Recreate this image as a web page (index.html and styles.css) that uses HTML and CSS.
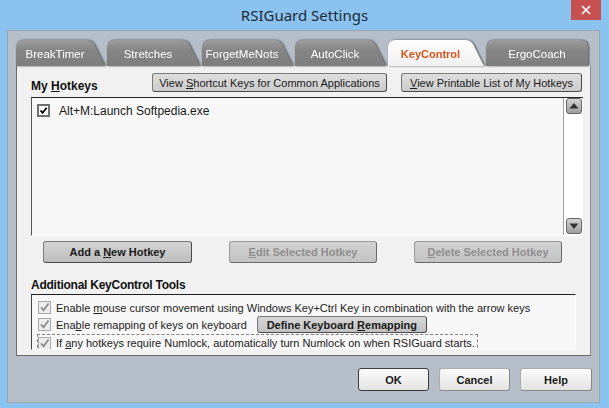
FILE: index.html
```html
<!DOCTYPE html>
<html>
<head>
<meta charset="utf-8">
<link rel="stylesheet" href="styles.css">
</head>
<body>
<div class="window">
  <div class="titlebar">
    <span class="title">RSIGuard Settings</span>
    <div class="close"><svg width="10" height="10" viewBox="0 0 10 10"><path d="M1 1 L9 9 M9 1 L1 9" stroke="#fff" stroke-width="1.7" fill="none"/></svg></div>
  </div>
  <div class="client">
    <div class="tabs">
      <div class="tab-wrap"><div class="tab">BreakTimer</div></div>
      <div class="tab-wrap"><div class="tab">Stretches</div></div>
      <div class="tab-wrap"><div class="tab">ForgetMeNots</div></div>
      <div class="tab-wrap"><div class="tab">AutoClick</div></div>
      <div class="tab-wrap active-wrap"><div class="tab active">KeyControl</div></div>
      <div class="tab-wrap"><div class="tab last">ErgoCoach</div></div>
    </div>
    <div class="panel">
      <div class="hk-head">
        <h2 class="heading">My <u>H</u>otkeys</h2>
        <button class="btn view view-short">View <u>S</u>hortcut Keys for Common Applications</button>
        <button class="btn view view-print"><u>V</u>iew Printable List of My Hotkeys</button>
      </div>
      <div class="list">
        <div class="list-items">
          <div class="item">
            <svg class="cb" width="13" height="13" viewBox="0 0 13 13"><rect x="1" y="1" width="11" height="11" fill="#fff" stroke="#6f6f6f" stroke-width="2"/><path d="M3.5 6.5 L5.6 8.8 L9.6 3.8" stroke="#000" stroke-width="1.8" fill="none"/></svg>
            <span>Alt+M:Launch Softpedia.exe</span>
          </div>
        </div>
        <div class="scroll">
          <svg class="arrow" width="16" height="16" viewBox="0 0 16 16"><defs><linearGradient id="ag" x1="0" y1="0" x2="0" y2="1"><stop offset="0" stop-color="#d6d6d6"/><stop offset="1" stop-color="#9c9c9c"/></linearGradient></defs><rect x="0.5" y="0.5" width="15" height="15" rx="2.5" fill="url(#ag)" stroke="#666"/><path d="M3.5 10.5 L8 5 L12.5 10.5 Z" fill="#333"/></svg>
          <svg class="arrow" width="16" height="16" viewBox="0 0 16 16"><rect x="0.5" y="0.5" width="15" height="15" rx="2.5" fill="url(#ag)" stroke="#666"/><path d="M3.5 5.5 L8 11 L12.5 5.5 Z" fill="#333"/></svg>
        </div>
      </div>
      <div class="actions">
        <button class="btn act">Add a <u>N</u>ew Hotkey</button>
        <button class="btn act disabled"><u>E</u>dit Selected Hotkey</button>
        <button class="btn act disabled"><u>D</u>elete Selected Hotkey</button>
      </div>
      <h2 class="heading tools-head">Additional KeyControl Tools</h2>
      <div class="tools">
        <div class="row">
          <svg class="cb2" width="13" height="13" viewBox="0 0 13 13"><rect x="0.5" y="0.5" width="12" height="12" fill="#ececec" stroke="#a9a9a9"/><path d="M3 6.3 L5.6 9.3 L10.5 2.5" stroke="#8d8d8d" stroke-width="1.8" fill="none"/></svg>
          <span>Enable <u>m</u>ouse cursor movement using Windows Key+Ctrl Key in combination with the arrow keys</span>
        </div>
        <div class="row">
          <svg class="cb2" width="13" height="13" viewBox="0 0 13 13"><rect x="0.5" y="0.5" width="12" height="12" fill="#ececec" stroke="#a9a9a9"/><path d="M3 6.3 L5.6 9.3 L10.5 2.5" stroke="#8d8d8d" stroke-width="1.8" fill="none"/></svg>
          <span>Ena<u>b</u>le remapping of keys on keyboard</span>
          <button class="btn remap">Define Keyboard <u>R</u>emapping</button>
        </div>
        <div class="row">
          <div class="focus">
            <svg class="cb2" width="13" height="13" viewBox="0 0 13 13"><rect x="0.5" y="0.5" width="12" height="12" fill="#ececec" stroke="#a9a9a9"/><path d="M3 6.3 L5.6 9.3 L10.5 2.5" stroke="#8d8d8d" stroke-width="1.8" fill="none"/></svg>
            <span>If <u>a</u>ny hotkeys require Numlock, automatically turn Numlock on when RSIGuard starts.</span>
          </div>
        </div>
      </div>
    </div>
    <div class="footer">
      <button class="btn foot ok">OK</button>
      <button class="btn foot">Cancel</button>
      <button class="btn foot help">Help</button>
    </div>
  </div>
</div>
</body>
</html>
```

FILE: styles.css
```css
* { box-sizing: border-box; }
body {
  margin: 0;
  font-family: "Liberation Sans", Arial, sans-serif;
  color: #1a1a1a;
}
.window {
  width: 609px;
  height: 408px;
  background: #8ac3ef;
  display: flex;
  flex-direction: column;
}
.titlebar {
  height: 30px;
  display: grid;
  grid-template-columns: 1fr auto 1fr;
  align-items: start;
}
.title {
  grid-column: 2;
  font-family: "Noto Sans", "Open Sans", sans-serif;
  font-size: 15px;
  color: #1f2a36;
  padding-top: 5px;
  line-height: 20px;
}
.close {
  grid-column: 3;
  justify-self: end;
  width: 30px;
  height: 20px;
  margin-right: 8px;
  background: #c75151;
  display: flex;
  align-items: center;
  justify-content: center;
}
.client {
  flex: 1;
  margin: 0 9px 5px 7px;
  background: #b6bfc9;
  border: 1px solid #9aa5b1;
  padding: 9px 8px 0 8px;
  display: flex;
  flex-direction: column;
}
.tabs {
  display: grid;
  grid-template-columns: 91px 95px 93px 93px 98px 102px;
  height: 26px;
}
.tab-wrap {
  filter: drop-shadow(1px 0 1px rgba(0, 0, 0, 0.6));
}
.tab {
  height: 26px;
  clip-path: polygon(0 7px, 1px 3px, 3px 1px, 7px 0, calc(100% - 20px) 0, calc(100% - 16px) 1px, calc(100% - 13px) 4px, calc(100% - 2px) 100%, 0 100%);
  background: linear-gradient(#9c9c9c, #858585 40%, #7d7d7d);
  color: #fff;
  font-size: 11.5px;
  display: flex;
  align-items: center;
  justify-content: center;
  padding: 1px 13px 0 0;
}
.tab.active {
  background: linear-gradient(#fdfdfd, #f1f1f1);
  color: #d8521a;
  font-weight: bold;
  font-size: 11px;
}
.tab.last {
  clip-path: polygon(0 7px, 1px 3px, 3px 1px, 7px 0, calc(100% - 7px) 0, calc(100% - 3px) 1px, calc(100% - 1px) 3px, 100% 7px, 100% 100%, 0 100%);
  padding-right: 0;
}
.panel {
  height: 290px;
  background: #f1f1f1;
  border-left: 1px solid #6b6b6b;
  border-bottom: 1px solid #6b6b6b;
  border-right: 1px solid #8c8c8c;
  padding: 7px 7px 0 14px;
  display: flex;
  flex-direction: column;
}
.heading {
  margin: 0;
  font-size: 12px;
  font-weight: bold;
  color: #111;
}
.hk-head {
  display: flex;
  align-items: center;
  height: 19px;
}
.hk-head .heading {
  flex: 1;
  padding-top: 6px;
}
.btn {
  font-family: "Liberation Sans", Arial, sans-serif;
  font-size: 11px;
  color: #1a1a1a;
  border: 1px solid #7a7a7a;
  border-right-color: #4a4a4a;
  border-bottom-color: #4a4a4a;
  border-radius: 3px;
  background: linear-gradient(#dedede, #cbcbcb);
  padding: 0;
  margin: 0;
  white-space: nowrap;
}
.view {
  height: 19px;
}
.view-short { width: 235px; }
.view-print { width: 181px; margin-left: 14px; margin-right: 1px; }
.list {
  margin-top: 5px;
  height: 139px;
  display: flex;
  border-top: 1px solid #222;
  border-left: 1px solid #555;
  border-bottom: 1px solid #fff;
  background: #f7f7f7;
}
.list-items {
  flex: 1;
  padding: 6px 0 0 5px;
}
.item {
  display: flex;
  align-items: center;
  gap: 9px;
  font-size: 12px;
  height: 13px;
}
.scroll {
  width: 20px;
  background: #fff;
  border-left: 1px solid #a0a0a0;
  display: flex;
  flex-direction: column;
  justify-content: space-between;
  align-items: center;
  padding: 0 0 1px 0;
}
.actions {
  margin-top: 5px;
  display: flex;
  gap: 37px;
  padding-left: 12px;
}
.act {
  width: 149px;
  height: 22px;
  font-weight: bold;
  background: linear-gradient(#d4d4d4, #bdbdbd);
}
.act.disabled {
  width: 148px;
  color: #8e8e8e;
  border-color: #9a9a9a;
  border-right-color: #6a6a6a;
  border-bottom-color: #6a6a6a;
  background: linear-gradient(#d2d2d2, #c3c3c3);
}
.tools-head {
  margin-top: 14px;
  line-height: 16px;
  letter-spacing: -0.25px;
}
.tools {
  margin-top: 1px;
  width: 545px;
  height: 56px;
  border-top: 1px solid #1e1e1e;
  border-left: 1px solid #444;
  border-right: 1px solid #fff;
  border-bottom: 1px solid #fff;
  background: #f7f7f7;
  padding: 4px 0 0 6px;
  overflow: hidden;
}
.row {
  display: flex;
  align-items: center;
  height: 17px;
  font-size: 11px;
  color: #222;
  white-space: nowrap;
}
.cb2 { margin-right: 5px; flex: none; }
.remap {
  margin-left: 10px;
  width: 170px;
  height: 17px;
  font-weight: bold;
  background: linear-gradient(#d6d6d6, #c2c2c2);
}
.focus {
  display: flex;
  align-items: center;
  height: 19px;
  width: 441px;
  border: 1px dashed #808080;
  margin-top: 3px;
  margin-left: -1px;
}
.footer {
  display: flex;
  justify-content: flex-end;
  gap: 10px;
  margin-top: 12px;
  margin-right: -1px;
}
.foot {
  width: 71px;
  height: 23px;
  font-weight: bold;
  border-color: #acacac;
  border-right-color: #8a8a8a;
  border-bottom-color: #8a8a8a;
  background: linear-gradient(#fbfbfb, #e3e3e3);
}
.foot.ok {
  border-color: #3c3c3c;
}
.foot.help { width: 72px; }
```
